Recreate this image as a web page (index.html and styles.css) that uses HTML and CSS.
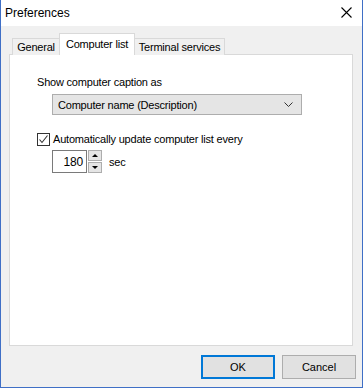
FILE: index.html
```html
<!DOCTYPE html>
<html lang="en">
<head>
    <meta charset="UTF-8">
    <title>Preferences</title>
    <link rel="stylesheet" href="styles.css">
</head>
<body>
    <div class="window">
        <div class="titlebar">
            <span class="title">Preferences</span>
            <svg class="close" width="11" height="11" viewBox="0 0 11 11">
                <path d="M0.5 0.5 L10.5 10.5 M10.5 0.5 L0.5 10.5" stroke="#000" stroke-width="1.1" fill="none"/>
            </svg>
        </div>
        <div class="client">
            <div class="tabs">
                <div class="tab tab-general">General</div>
                <div class="tab tab-active">Computer list</div>
                <div class="tab tab-terminal">Terminal services</div>
            </div>
            <div class="panel">
                <div class="label">Show computer caption as</div>
                <div class="combo">
                    <span>Computer name (Description)</span>
                    <svg width="9" height="5" viewBox="0 0 9 5">
                        <polyline points="0.5,0.5 4.5,4.5 8.5,0.5" stroke="#333" stroke-width="1" fill="none"/>
                    </svg>
                </div>
                <div class="check-row">
                    <span class="checkbox">
                        <svg width="11" height="11" viewBox="0 0 11 11">
                            <polyline points="1.5,5.5 4,8.5 9.5,1.5" stroke="#333" stroke-width="1.1" fill="none"/>
                        </svg>
                    </span>
                    <span>Automatically update computer list every</span>
                </div>
                <div class="spin-row">
                    <div class="spin-edit">180</div>
                    <div class="spin-buttons">
                        <div class="spin-btn"><span class="arrow-up"></span></div>
                        <div class="spin-btn"><span class="arrow-down"></span></div>
                    </div>
                    <span class="unit">sec</span>
                </div>
            </div>
            <div class="buttons">
                <button class="btn btn-default">OK</button>
                <button class="btn">Cancel</button>
            </div>
        </div>
    </div>
</body>
</html>
```

FILE: styles.css
```css
body {
    margin: 0;
    font-family: "Liberation Sans", Arial, sans-serif;
    font-size: 11px;
    letter-spacing: -0.2px;
    color: #000;
}
.window {
    width: 363px;
    height: 388px;
    box-sizing: border-box;
    border: 1px solid #3f6fc6;
    border-top: none;
    display: flex;
    flex-direction: column;
    background: #f0f0f0;
}
.titlebar {
    height: 26px;
    background: #fff;
    display: flex;
    align-items: center;
    justify-content: space-between;
    padding: 0 10px 0 4px;
    letter-spacing: 0;
}
.title {
    font-size: 12px;
    margin-top: -1px;
}
.close {
    margin-top: -1px;
}
.client {
    flex: 1;
    padding: 8px 9px 0 8px;
    display: flex;
    flex-direction: column;
}
.tabs {
    display: flex;
    align-items: flex-end;
    height: 20px;
    padding-left: 3px;
    position: relative;
    z-index: 1;
}
.tab {
    box-sizing: border-box;
    height: 17px;
    border: 1px solid #d9d9d9;
    border-bottom: none;
    background: #f0f0f0;
    padding: 2px 0 0 0;
    text-align: center;
    margin-bottom: -1px;
}
.tab-general {
    width: 48px;
}
.tab-active {
    width: 76px;
    height: 22px;
    background: #fff;
    padding-top: 4px;
    margin-left: -1px;
}
.tab-terminal {
    width: 91px;
    margin-left: -1px;
}
.panel {
    box-sizing: border-box;
    width: 344px;
    height: 292px;
    border: 1px solid #d9d9d9;
    background: #fff;
    padding: 21px 0 0 27px;
}
.label {
    line-height: 13px;
}
.combo {
    box-sizing: border-box;
    width: 250px;
    height: 21px;
    margin: 5px 0 0 15px;
    background: #e5e5e5;
    border: 1px solid #adadad;
    display: flex;
    align-items: center;
    justify-content: space-between;
    padding: 0 8px 0 5px;
}
.check-row {
    display: flex;
    align-items: center;
    margin-top: 17px;
    height: 14px;
}
.checkbox {
    box-sizing: border-box;
    width: 13px;
    height: 13px;
    border: 1px solid #333;
    background: #fff;
    margin-right: 3px;
    display: flex;
}
.spin-row {
    display: flex;
    align-items: center;
    margin: 4px 0 0 15px;
}
.spin-edit {
    box-sizing: border-box;
    width: 35px;
    height: 23px;
    border: 1px solid #7a7a7a;
    text-align: right;
    padding: 4px 3px 0 0;
    font-size: 12px;
}
.spin-buttons {
    display: flex;
    flex-direction: column;
    gap: 1px;
    margin-left: 1px;
}
.spin-btn {
    box-sizing: border-box;
    width: 14px;
    height: 11px;
    background: #e5e5e5;
    border: 1px solid #adadad;
    display: flex;
    align-items: center;
    justify-content: center;
}
.arrow-up {
    border-left: 3px solid transparent;
    border-right: 3px solid transparent;
    border-bottom: 3px solid #000;
}
.arrow-down {
    border-left: 3px solid transparent;
    border-right: 3px solid transparent;
    border-top: 3px solid #000;
}
.unit {
    margin-left: 7px;
}
.buttons {
    display: flex;
    justify-content: flex-end;
    gap: 7px;
    padding: 9px 0 0 0;
    margin-right: -3px;
}
.btn {
    box-sizing: border-box;
    width: 74px;
    height: 24px;
    background: #e1e1e1;
    border: 1px solid #adadad;
    font-family: "Liberation Sans", Arial, sans-serif;
    font-size: 11px;
    color: #000;
    padding: 0;
}
.btn-default {
    border: 2px solid #0078d7;
}
```
